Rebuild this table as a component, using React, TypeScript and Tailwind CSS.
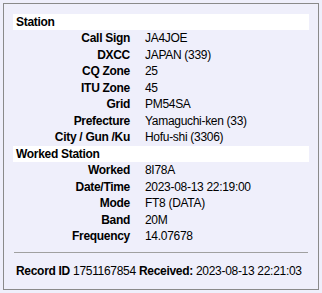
const stationRows: [string, string][] = [
  ["Call Sign", "JA4JOE"],
  ["DXCC", "JAPAN (339)"],
  ["CQ Zone", "25"],
  ["ITU Zone", "45"],
  ["Grid", "PM54SA"],
  ["Prefecture", "Yamaguchi-ken (33)"],
  ["City / Gun /Ku", "Hofu-shi (3306)"],
];

const workedRows: [string, string][] = [
  ["Worked", "8I78A"],
  ["Date/Time", "2023-08-13 22:19:00"],
  ["Mode", "FT8 (DATA)"],
  ["Band", "20M"],
  ["Frequency", "14.07678"],
];

const SectionHeader = ({ title }: { title: string }) => (
  <div className="h-[16.5px] bg-white pl-[3px] font-bold leading-[16.5px]">{title}</div>
);

const DetailRows = ({ rows }: { rows: [string, string][] }) => (
  <div className="grid grid-cols-[117px_1fr]">
    {rows.map(([label, value]) => (
      <div key={label} className="contents">
        <div className="h-[16.5px] text-right font-bold leading-[16.5px]">{label}</div>
        <div className="h-[16.5px] pl-[15px] leading-[16.5px]">{value}</div>
      </div>
    ))}
  </div>
);

export default function App() {
  return (
    <div
      className="h-[293px] w-[322px] bg-[#efeffb] p-[3px] text-[12px] tracking-[-0.3px] text-black"
      style={{ fontFamily: '"Liberation Sans", Arial, sans-serif' }}
    >
      <div className="h-[287px] border border-[#8a8a8a] px-[9px] pt-[9px]">
        <div className="pt-[0.5px]">
          <SectionHeader title="Station" />
          <DetailRows rows={stationRows} />
          <SectionHeader title="Worked Station" />
          <DetailRows rows={workedRows} />
        </div>
        <div className="mx-px mt-[7px] h-px bg-[#a0a0a0]" />
        <div className="mt-[10px] whitespace-nowrap pl-[3px] leading-[16px]">
          <span className="font-bold">Record ID</span> 1751167854{" "}
          <span className="font-bold">Received:</span> 2023-08-13 22:21:03
        </div>
      </div>
    </div>
  );
}
